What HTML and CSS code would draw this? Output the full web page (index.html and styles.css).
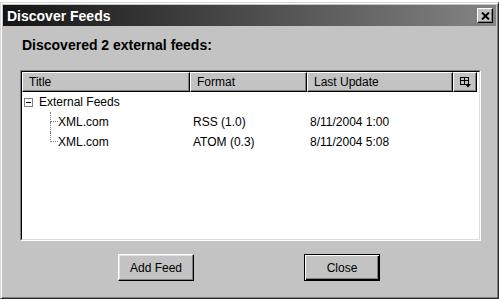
FILE: index.html
```html
<!DOCTYPE html>
<html lang="en">
<head>
    <meta charset="UTF-8">
    <title>Discover Feeds</title>
    <link rel="stylesheet" href="styles.css">
</head>
<body>
    <div class="window">
        <div class="titlebar">
            <span class="title">Discover Feeds</span>
            <button class="close">
                <svg width="9" height="8" viewBox="0 0 9 8">
                    <path d="M1 0.5 L8 7.5 M8 0.5 L1 7.5" stroke="#000" stroke-width="2" fill="none"/>
                </svg>
            </button>
        </div>
        <div class="content">
            <p class="heading">Discovered 2 external feeds:</p>
            <div class="list">
                <div class="list-inner">
                    <div class="header">
                        <div class="col col-title">Title</div>
                        <div class="col col-format">Format</div>
                        <div class="col col-date">Last Update</div>
                        <div class="col col-pick">
                            <svg width="11" height="11" viewBox="0 0 11 11">
                                <rect x="0.5" y="0.5" width="8" height="7" fill="none" stroke="#000"/>
                                <path d="M0.5 3.5 H8.5 M4.5 0.5 V7.5" stroke="#000"/>
                                <path d="M5 7 H11 L8 10.5 Z" fill="#000"/>
                            </svg>
                        </div>
                    </div>
                    <div class="row">
                        <div class="cell cell-title">
                            <span class="expander"></span>External Feeds
                        </div>
                        <div class="cell"></div>
                        <div class="cell"></div>
                    </div>
                    <div class="row">
                        <div class="cell cell-title child">
                            <span class="branch"><span class="up"></span><span class="down"></span></span>XML.com
                        </div>
                        <div class="cell">RSS (1.0)</div>
                        <div class="cell">8/11/2004 1:00</div>
                    </div>
                    <div class="row">
                        <div class="cell cell-title child">
                            <span class="branch last"><span class="up"></span><span class="down"></span></span>XML.com
                        </div>
                        <div class="cell">ATOM (0.3)</div>
                        <div class="cell">8/11/2004 5:08</div>
                    </div>
                </div>
            </div>
            <div class="buttons">
                <button class="btn">Add Feed</button>
                <button class="btn btn-default">Close</button>
            </div>
        </div>
    </div>
</body>
</html>
```

FILE: styles.css
```css
body {
    margin: 0;
    background: #fff;
    font-family: "Liberation Sans", Arial, sans-serif;
}
.window {
    box-sizing: border-box;
    width: 499px;
    height: 297px;
    margin-top: 2px;
    padding: 2px;
    background: #c3c3c3;
    border: 1px solid;
    border-color: #d6d6d6 #2a2a2a #2a2a2a #d6d6d6;
    box-shadow: inset 1px 1px #fff, inset -1px -1px #808080;
}
.titlebar {
    height: 21px;
    display: flex;
    align-items: center;
    justify-content: space-between;
    padding: 0 3px 0 4px;
    background: linear-gradient(to right, #141414, #848484);
}
.title {
    color: #fff;
    font-weight: bold;
    font-size: 14px;
}
.close {
    box-sizing: border-box;
    width: 16px;
    height: 15px;
    padding: 0;
    display: flex;
    align-items: center;
    justify-content: center;
    background: #c3c3c3;
    border: 1px solid;
    border-color: #fff #000 #000 #fff;
    box-shadow: inset -1px -1px #808080;
}
.content {
    padding: 11px 15px 0 17px;
}
.heading {
    margin: 0 0 0 2px;
    font-size: 14px;
    font-weight: bold;
    line-height: 16px;
}
.list {
    box-sizing: border-box;
    width: 461px;
    height: 171px;
    margin-top: 17px;
    border: 1px solid;
    border-color: #808080 #fff #fff #808080;
}
.list-inner {
    box-sizing: border-box;
    height: 100%;
    background: #fff;
    border: 1px solid;
    border-color: #000 #dcdcdc #dcdcdc #000;
    font-size: 12px;
}
.header {
    display: flex;
    height: 20px;
}
.col {
    box-sizing: border-box;
    height: 20px;
    line-height: 18px;
    padding-left: 6px;
    background: #c3c3c3;
    border: 1px solid;
    border-color: #fff #000 #000 #fff;
    box-shadow: inset -1px -1px #808080;
}
.col-title { width: 168px; }
.col-format { width: 117px; }
.col-date { width: 146px; }
.col-pick {
    width: 24px;
    padding: 0;
    display: flex;
    align-items: center;
    justify-content: center;
}
.row {
    display: grid;
    grid-template-columns: 168px 117px 146px;
    height: 20px;
    line-height: 20px;
}
.cell {
    padding-left: 3px;
    white-space: nowrap;
}
.cell-title {
    display: flex;
    align-items: center;
    padding-left: 2px;
}
.expander {
    box-sizing: border-box;
    width: 9px;
    height: 9px;
    margin-right: 6px;
    border: 1px solid #808080;
    background: linear-gradient(#000, #000) center / 5px 1px no-repeat;
}
.child {
    padding-left: 28px;
}
.branch {
    display: flex;
    flex-direction: column;
    width: 8px;
    height: 20px;
}
.branch .up {
    height: 10px;
    border-left: 1px dotted #808080;
    border-bottom: 1px dotted #808080;
    box-sizing: border-box;
}
.branch .down {
    height: 10px;
    border-left: 1px dotted #808080;
}
.branch.last .down {
    border-left: none;
}
.buttons {
    display: flex;
    justify-content: center;
    gap: 110px;
    margin-top: 13px;
    padding-right: 3px;
}
.btn {
    box-sizing: border-box;
    width: 76px;
    height: 27px;
    font-family: "Liberation Sans", Arial, sans-serif;
    font-size: 12px;
    color: #000;
    background: #c3c3c3;
    border: 1px solid;
    border-color: #fff #000 #000 #fff;
    box-shadow: inset -1px -1px #808080, inset 1px 1px #e0e0e0;
}
.btn-default {
    border-color: #000;
    box-shadow: inset 1px 1px #fff, inset -1px -1px #000, inset -2px -2px #808080;
}
```
